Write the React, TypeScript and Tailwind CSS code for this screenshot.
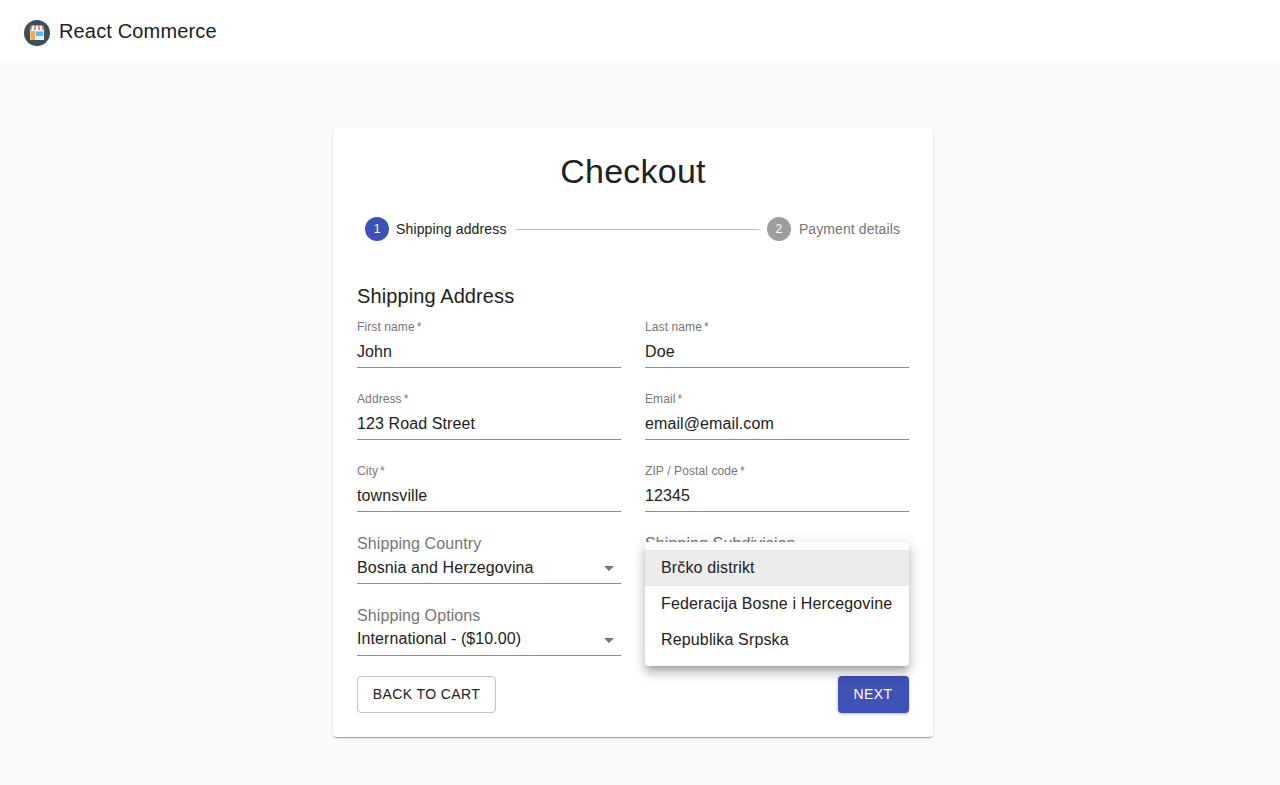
import React from "react";

function Logo() {
  return (
    <svg width="26" height="26" viewBox="0 0 26 26" className="shrink-0 mt-[5px]">
      <circle cx="13" cy="13" r="13" fill="#3a4f5c" />
      <rect x="6" y="10" width="14" height="10" fill="#eceff1" />
      <rect x="6.5" y="11" width="4.5" height="9" fill="#f5a83c" />
      <rect x="12" y="11.5" width="7" height="4.5" fill="#64b5f6" />
      <path d="M6.5 5.5h13l1 4.5h-15z" fill="#e57373" />
      <path d="M8.5 5.5h2l-.5 4.5h-2.5zM12 5.5h2l.3 4.5h-2.6zM15.5 5.5h2l1 4.5h-2.5z" fill="#fafafa" />
    </svg>
  );
}

function Field({ label, value }: { label: string; value: string }) {
  return (
    <div className="h-[48px] flex flex-col border-b border-[#8c8c8c]">
      <div className="h-[14px] text-[12px] leading-[14px] tracking-[0.1px] text-[#757575]">
        {label}
        <span className="ml-[2px]">*</span>
      </div>
      <div className="mt-[6px] text-[16px] leading-[24px] tracking-[0.1px] text-[#212121]">{value}</div>
    </div>
  );
}

function SelectField({ label, value, tight }: { label: string; value?: string; tight?: boolean }) {
  return (
    <div className="h-[48px] relative border-b border-[#8c8c8c]">
      <div className="-mt-[2px] h-[20px] text-[16px] leading-[20px] tracking-[0.1px] text-[#757575]">{label}</div>
      {value && (
        <div className={`text-[16px] leading-[24px] tracking-[0.1px] text-[#212121] ${tight ? "mt-[1px]" : "mt-[2px]"}`}>{value}</div>
      )}
      <svg width="24" height="24" viewBox="0 0 24 24" className="absolute right-0 top-[20px]" fill="#757575">
        <path d="M7 10l5 5 5-5z" />
      </svg>
    </div>
  );
}

export default function App() {
  return (
    <div className="min-h-[785px] bg-[#fafafa] font-['Liberation_Sans',Arial,sans-serif]">
      <header className="h-[60px] bg-white flex items-center pl-[24px] gap-[9px]">
        <Logo />
        <span className="mt-[2px] text-[20px] leading-[24px] text-[#212121] tracking-[0.15px]">React Commerce</span>
      </header>
      <main className="flex justify-center pt-[67px] pr-[14px]">
        <div className="relative w-[600px] h-[610px] bg-white rounded-[4px] shadow-[0_2px_1px_-1px_rgba(0,0,0,0.2),0_1px_1px_0_rgba(0,0,0,0.14),0_1px_3px_0_rgba(0,0,0,0.12)] px-[24px] pt-[24px]">
          <h1 className="text-center text-[34px] leading-[40px] tracking-[0.25px] text-[#212121] font-normal">Checkout</h1>
          <div className="mt-[26px] flex items-center px-[8px] h-[24px]">
            <div className="w-[24px] h-[24px] rounded-full bg-[#3f51b5] text-white text-[12px] flex items-center justify-center">1</div>
            <span className="ml-[7px] text-[14px] tracking-[0.15px] text-[#212121]">Shipping address</span>
            <div className="flex-1 mx-[8px] h-px bg-[#bdbdbd]" />
            <div className="w-[24px] h-[24px] rounded-full bg-[#9e9e9e] text-white text-[12px] flex items-center justify-center">2</div>
            <span className="ml-[8px] mr-[1px] text-[14px] tracking-[0.1px] text-[#757575]">Payment details</span>
          </div>
          <h2 className="mt-[41px] text-[20px] leading-[28px] tracking-[0.1px] text-[#212121] font-normal">Shipping Address</h2>
          <div className="mt-[10px] grid grid-cols-2 gap-x-[24px] gap-y-[24px]">
            <Field label="First name" value="John" />
            <Field label="Last name" value="Doe" />
            <Field label="Address" value="123 Road Street" />
            <Field label="Email" value="email@email.com" />
            <Field label="City" value="townsville" />
            <Field label="ZIP / Postal code" value="12345" />
            <SelectField label="Shipping Country" value="Bosnia and Herzegovina" />
            <SelectField label="Shipping Subdivision" />
            <SelectField label="Shipping Options" value="International - ($10.00)" tight />
          </div>
          <div className="mt-[20px] flex justify-between">
            <button className="h-[37px] w-[139px] border border-[#c4c4c4] rounded-[4px] text-[14px] tracking-[0.4px] text-[#212121] bg-white">BACK TO CART</button>
            <button className="h-[37px] w-[71px] pr-[1px] rounded-[4px] bg-[#3f51b5] text-white text-[14px] tracking-[0.4px] shadow-[0_1px_3px_rgba(0,0,0,0.3)]">NEXT</button>
          </div>
          <div className="absolute left-[312px] top-[415px] w-[264px] bg-white rounded-[4px] py-[8px] shadow-[0_5px_5px_-3px_rgba(0,0,0,0.2),0_8px_10px_1px_rgba(0,0,0,0.14),0_3px_14px_2px_rgba(0,0,0,0.12)] text-[16px] tracking-[0.15px] text-[#212121]">
            <div className="h-[36px] px-[16px] flex items-center bg-[#ebebeb]">Brčko distrikt</div>
            <div className="h-[36px] px-[16px] flex items-center whitespace-nowrap">Federacija Bosne i Hercegovine</div>
            <div className="h-[36px] px-[16px] flex items-center">Republika Srpska</div>
          </div>
        </div>
      </main>
    </div>
  );
}
